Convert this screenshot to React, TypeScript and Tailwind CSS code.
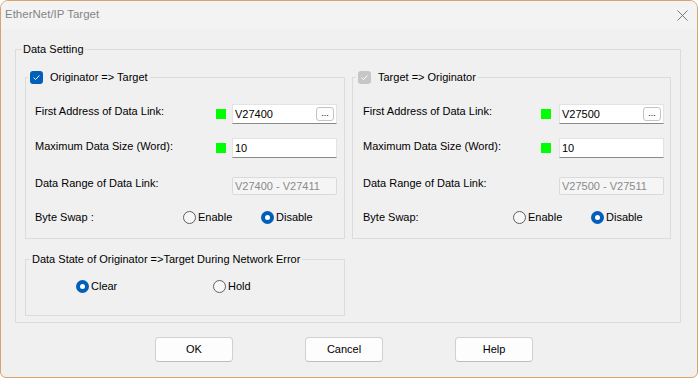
import type { ReactNode } from "react";

function Check({ disabled }: { disabled?: boolean }) {
  return (
    <span
      className={
        disabled
          ? "flex h-[13px] w-[13px] items-center justify-center rounded-[3px] bg-[#c6c6c6]"
          : "flex h-[13px] w-[13px] items-center justify-center rounded-[3px] bg-[#005fb8]"
      }
    >
      <svg width="9" height="9" viewBox="0 0 9 9">
        <path d="M1.6 4.7 L3.6 6.5 L7.4 2.5" stroke="white" strokeWidth="1" fill="none" />
      </svg>
    </span>
  );
}

function Radio({ checked, label, className = "" }: { checked?: boolean; label: string; className?: string }) {
  return (
    <div className={"flex items-center gap-[2px] " + className}>
      {checked ? (
        <span className="flex h-[13px] w-[13px] items-center justify-center rounded-full bg-[#005fb8]">
          <span className="h-[5px] w-[5px] rounded-full bg-white" />
        </span>
      ) : (
        <span className="h-[13px] w-[13px] rounded-full border border-[#5f5f5f] bg-[#f7f7f7]" />
      )}
      <span>{label}</span>
    </div>
  );
}

function Group({ className, legend, legendClass, children }: { className: string; legend: ReactNode; legendClass: string; children?: ReactNode }) {
  return (
    <div className={"relative border border-[#dcdcdc] " + className}>
      <div className={"absolute top-[-9px] flex h-[16px] items-center bg-[#f0f0f0] " + legendClass}>{legend}</div>
      {children}
    </div>
  );
}

function Green() {
  return <span className="h-[10px] w-[10px] shrink-0 bg-[#00ff00]" />;
}

function AddrInput({ value, browse }: { value: string; browse?: boolean }) {
  return (
    <div className="flex h-[20px] w-[105px] items-center justify-between border border-[#e3e3e3] border-b-[#8a8a8a] bg-white pl-[2px] pr-[2px]">
      <span>{value}</span>
      {browse && (
        <span className="flex h-[14px] w-[18px] items-end justify-center rounded-[3px] border border-[#c4c4c4] bg-[#fcfcfc] pb-[2px] text-[9px] leading-[9px]">
          ...
        </span>
      )}
    </div>
  );
}

function Range({ value }: { value: string }) {
  return (
    <div className="flex h-[18px] w-[105px] items-center rounded-[2px] border border-[#dadada] bg-[#f5f5f5] pl-[2px] text-[#8a8a8a]">
      {value}
    </div>
  );
}

function LinkBox(props: {
  className: string;
  legendClass: string;
  title: string;
  disabled?: boolean;
  pad: string;
  labelW: string;
  rangeW: string;
  swapW: string;
  inputGap: string;
  addr: string;
  range: string;
  swapLabel: string;
}) {
  return (
    <Group
      className={props.className}
      legendClass={props.legendClass}
      legend={
        <div className="flex items-center gap-[7px]">
          <Check disabled={props.disabled} />
          <span>{props.title}</span>
        </div>
      }
    >
      <div className={"flex flex-col pt-[26px] " + props.pad}>
        <div className="flex h-[20px] items-center">
          <span className={"pb-[5px] " + props.labelW}>First Address of Data Link:</span>
          <Green />
          <div className={props.inputGap}>
            <AddrInput value={props.addr} browse />
          </div>
        </div>
        <div className="mt-[14px] flex h-[20px] items-center">
          <span className={"pb-[4px] " + props.labelW}>Maximum Data Size (Word):</span>
          <Green />
          <div className={props.inputGap}>
            <AddrInput value="10" />
          </div>
        </div>
        <div className="mt-[19px] flex h-[18px] items-center">
          <span className={"pb-[5px] " + props.rangeW}>Data Range of Data Link:</span>
          <Range value={props.range} />
        </div>
        <div className="mt-[13px] flex h-[18px] items-center">
          <span className={props.swapW}>{props.swapLabel}</span>
          <Radio label="Enable" className="w-[78px]" />
          <Radio label="Disable" checked />
        </div>
      </div>
    </Group>
  );
}

export default function App() {
  return (
    <div className="h-[378px] w-[698px] bg-white font-['Liberation_Sans',Arial,sans-serif] text-[11px] text-black">
      <div className="flex h-[378px] w-[698px] flex-col overflow-hidden rounded-t-[8px] rounded-b-[6px] border border-[#d9a46c] bg-[#f0f0f0]">
        <div className="flex h-[28px] shrink-0 items-center justify-between bg-[#f3f3f3] pl-[4px] pr-[9px]">
          <span className="text-[11.5px] text-[#858585]">EtherNet/IP Target</span>
          <svg width="11" height="11" viewBox="0 0 11 11">
            <path d="M0.5 0.5 L10.5 10.5 M10.5 0.5 L0.5 10.5" stroke="#6a6a6a" strokeWidth="0.9" />
          </svg>
        </div>

        <Group
          className="ml-[14px] mt-[20px] h-[274px] w-[666px] shrink-0"
          legendClass="left-[6px] px-[1px]"
          legend={<span>Data Setting</span>}
        >
          <div className="ml-[9px] mt-[27px] flex gap-[7px]">
            <LinkBox
              className="h-[162px] w-[320px]"
              legendClass="left-[2px] px-[2px]"
              title="Originator => Target"
              pad="pl-[9px]"
              labelW="w-[181px]"
              rangeW="w-[197px]"
              swapW="w-[148px]"
              inputGap="ml-[6px]"
              addr="V27400"
              range="V27400 - V27411"
              swapLabel="Byte Swap :"
            />
            <LinkBox
              className="h-[162px] w-[319px]"
              legendClass="left-[3px] px-[2px]"
              title="Target => Originator"
              disabled
              pad="pl-[10px]"
              labelW="w-[178px]"
              rangeW="w-[196px]"
              swapW="w-[150px]"
              inputGap="ml-[8px]"
              addr="V27500"
              range="V27500 - V27511"
              swapLabel="Byte Swap:"
            />
          </div>

          <Group
            className="ml-[9px] mt-[20px] h-[57px] w-[320px]"
            legendClass="left-[4px] px-[2px]"
            legend={<span>Data State of Originator =&gt;Target During Network Error</span>}
          >
            <div className="mt-[17px] flex h-[18px] items-center pl-[50px]">
              <Radio label="Clear" checked className="w-[137px]" />
              <Radio label="Hold" />
            </div>
          </Group>
        </Group>

        <div className="mt-[14px] flex gap-[72px] pl-[154px]">
          {["OK", "Cancel", "Help"].map((b) => (
            <button
              key={b}
              type="button"
              className="flex h-[25px] w-[78px] items-center justify-center rounded-[4px] border border-[#d0d0d0] border-b-[#bdbdbd] bg-[#fdfdfd]"
            >
              {b}
            </button>
          ))}
        </div>
      </div>
    </div>
  );
}
